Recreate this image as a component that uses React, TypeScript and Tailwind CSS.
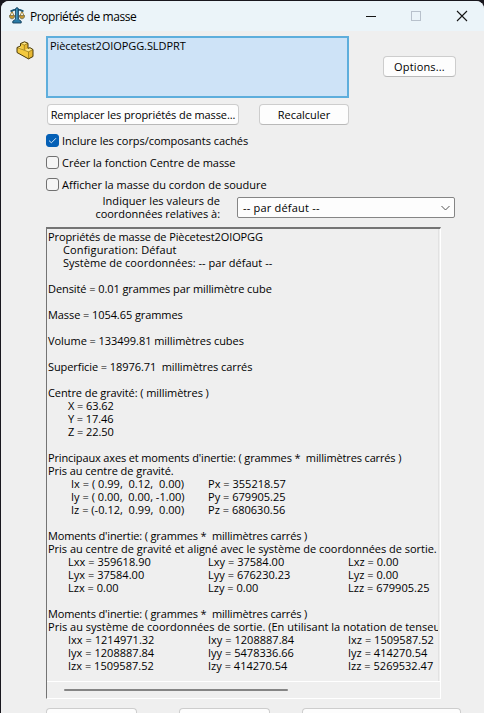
import type { ReactNode } from 'react';

function Line({ children, className = '' }: { children?: ReactNode; className?: string }) {
  return <div className={`h-[13px] whitespace-pre ${className}`}>{children}</div>;
}

function Row({ cells, first = 'pl-5' }: { cells: string[]; first?: string }) {
  return (
    <div className="flex h-[13px] whitespace-pre tracking-[0.02px]">
      <span className={`w-[160px] shrink-0 ${first}`}>{cells[0]}</span>
      <span className="w-[140px] shrink-0">{cells[1]}</span>
      <span className="shrink-0">{cells[2]}</span>
    </div>
  );
}

function Button({ children, className = '' }: { children?: ReactNode; className?: string }) {
  return (
    <button
      className={`flex h-[21px] shrink-0 items-center justify-center rounded-[4px] border border-[#cdcdcd] border-b-[#b9b9b9] bg-[#fdfdfd] whitespace-nowrap ${className}`}
    >
      {children}
    </button>
  );
}

function Check({ label, checked = false, className = '' }: { label: string; checked?: boolean; className?: string }) {
  return (
    <label className="flex h-[22px] items-center">
      <span
        className={`flex size-[13px] items-center justify-center rounded-[3px] border ${
          checked ? 'border-[#0560b6] bg-[#0560b6]' : 'border-[#717171] bg-[#f5f5f5]'
        }`}
      >
        {checked && (
          <svg width="9" height="9" viewBox="0 0 9 9" fill="none" stroke="#d5e9fa" strokeWidth="1">
            <path d="M1 4.6 3.4 6.8 8 2.2" />
          </svg>
        )}
      </span>
      <span className={`ml-[3px] whitespace-nowrap ${className}`}>{label}</span>
    </label>
  );
}

function ScaleIcon() {
  return (
    <svg width="16" height="17" viewBox="0 0 16 17" fill="none">
      <path d="M3 4.200 .9 9M3 4.200 5.100 9M13 4.200 10.900 9M13 4.200 15.100 9" stroke="#a8842f" strokeWidth="1" />
      <path d="M1.500 4.300 5 2.900h6l3.500 1.400" stroke="#1f5877" strokeWidth="1.800" />
      <path d="M.3 8.600h5.400c0 2-1.200 3.200-2.700 3.200S.3 10.600.3 8.600ZM10.300 8.600h5.400c0 2-1.200 3.200-2.700 3.200s-2.700-1.200-2.700-3.200Z" fill="#c9992f" stroke="#5a5f48" strokeWidth=".7" />
      <path d="M6.600 1.500 8 .5l1.400 1v10.700l2.800 2V16H3.800v-1.800l2.800-2Z" fill="#2a7ba6" stroke="#173f5b" strokeWidth=".9" />
      <path d="M7.700 2v11" stroke="#55a7ca" strokeWidth=".8" />
    </svg>
  );
}

function PartIcon() {
  return (
    <svg width="18" height="19" viewBox="0 0 18 19" fill="none" strokeLinejoin="round">
      <path d="M1 6.500 4.500 5V2.500L8.500.8l3.500 1.500v5l2-.6 3 1.800v7l-4.500 2.400L1 11.500Z" fill="#f3c93f" />
      <path d="M4.500 2.500 8.500.8 12 2.300 8.300 4ZM1 6.500 4.500 5v2l4 2 3.500-1.700 2-.6 3 1.800-4.500 2.300Z" fill="#ffe888" />
      <path d="M12.500 10.800 17 8.500v7l-4.500 2.400ZM8.300 4 12 2.300v5L8.500 9Z" fill="#e8b832" />
      <path d="M4.500 2.500 8.300 4 12 2.300M8.300 4v5M1 6.500l11.500 4.300L17 8.500M12.500 10.800v7" stroke="#80640f" strokeWidth=".6" />
      <path d="M1 6.500 4.500 5V2.500L8.500.8l3.500 1.500v5l2-.6 3 1.800v7l-4.500 2.400L1 11.500Z" stroke="#4b3b0b" />
    </svg>
  );
}

export default function App() {
  return (
    <div className="h-[713px] w-[484px] overflow-hidden bg-[#18171e] pt-px pl-px font-['Open_Sans',sans-serif] text-[11px] leading-[13px] text-black">
      <div className="flex h-full flex-col overflow-hidden rounded-t-[8px] bg-[#efefef]">
        <header className="flex h-[30px] shrink-0 items-center bg-[#ebf4f9] pb-px pl-[8px]">
          <ScaleIcon />
          <span className="ml-[5px] pt-[2px] text-[12px] tracking-[-0.42px]">Propriétés de masse</span>
          <svg className="ml-auto mr-[16px]" width="105" height="12" viewBox="0 0 105 12" fill="none" stroke="#151515">
            <path d="M3 6.500h10" />
            <rect x="48.500" y="1.500" width="9" height="9" stroke="#b8c1cc" />
            <path d="m94 1 10 10M104 1 94 11" strokeWidth="1.100" />
          </svg>
        </header>

        <main className="flex min-h-0 flex-1 flex-col pl-[45px]">
          <section className="-ml-[30px] mt-[5px] flex h-[62px] items-start">
            <div className="mt-[5px] w-[30px]"><PartIcon /></div>
            <div className="h-[62px] w-[303px] border-2 border-[#5eaedc] bg-[#cee3f7] pt-px pl-[2px] tracking-[-0.08px]">
              Piècetest2OIOPGG.SLDPRT
            </div>
            <Button className="mt-[20px] ml-[34px] w-[73px] tracking-[0.15px]">Options...</Button>
          </section>

          <div className="mt-[6px] flex gap-5 pl-px">
            <Button className="w-[192px] tracking-[-0.1px]">Remplacer les propriétés de masse...</Button>
            <Button className="w-[90px]">Recalculer</Button>
          </div>

          <div className="mt-[4px] flex flex-col">
            <Check checked label="Inclure les corps/composants cachés" className="tracking-[-0.05px]" />
            <Check label="Créer la fonction Centre de masse" className="tracking-[-0.02px]" />
            <Check label="Afficher la masse du cordon de soudure" className="tracking-[0.01px]" />
          </div>

          <div className="-mt-px flex h-[28px] items-start">
            <div className="w-[174px] text-right">
              <div className="tracking-[0.06px]">Indiquer les valeurs de</div>
              <div className="tracking-[-0.03px]">coordonnées relatives à:</div>
            </div>
            <div className="mt-[3px] ml-[17px] flex h-[21px] w-[218px] items-center justify-between rounded-[2px] border border-[#858585] bg-[#fdfdfd] pr-[4px] pl-[5px]">
              <span className="tracking-[0.2px]">-- par défaut --</span>
              <svg width="9" height="6" viewBox="0 0 9 6" fill="none" stroke="#555"><path d="m.5 1 4 4 4-4" /></svg>
            </div>
          </div>

          <section className="mt-[5px] flex h-[472px] w-[395px] shrink-0 flex-col border border-t-2 border-[#fff] border-t-[#747474] border-l-[#747474]">
            <div className="h-[452px] w-[392px] overflow-hidden border-r border-[#e2e2e2] pt-px pl-[1px] tracking-[-0.08px]">
              <Line className="tracking-[-0.1px]">Propriétés de masse de Piècetest2OIOPGG</Line>
              <Line className="pl-[15px] tracking-[0.15px]">Configuration: Défaut</Line>
              <Line className="pl-[15px] tracking-[0.02px]">Système de coordonnées: -- par défaut --</Line>
              <Line />
              <Line>Densité = 0.01 grammes par millimètre cube</Line>
              <Line />
              <Line>Masse = 1054.65 grammes</Line>
              <Line />
              <Line className="tracking-[-0.05px]">Volume = 133499.81 millimètres cubes</Line>
              <Line />
              <Line>Superficie = 18976.71  millimètres carrés</Line>
              <Line />
              <Line>Centre de gravité: ( millimètres )</Line>
              <Line className="pl-5">X = 63.62</Line>
              <Line className="pl-5">Y = 17.46</Line>
              <Line className="pl-5">Z = 22.50</Line>
              <Line />
              <Line className="tracking-[-0.14px]">Principaux axes et moments d'inertie: ( grammes *  millimètres carrés )</Line>
              <Line className="tracking-[-0.05px]">Pris au centre de gravité.</Line>
              <Row first="pl-[23px]" cells={['Ix = ( 0.99,  0.12,  0.00)', 'Px = 355218.57', '']} />
              <Row first="pl-[23px]" cells={['Iy = ( 0.00,  0.00, -1.00)', 'Py = 679905.25', '']} />
              <Row first="pl-[23px]" cells={['Iz = (-0.12,  0.99,  0.00)', 'Pz = 680630.56', '']} />
              <Line />
              <Line className="tracking-[-0.15px]">Moments d'inertie: ( grammes *  millimètres carrés )</Line>
              <Line className="tracking-[-0.02px]">Pris au centre de gravité et aligné avec le système de coordonnées de sortie.</Line>
              <Row cells={['Lxx = 359618.90', 'Lxy = 37584.00', 'Lxz = 0.00']} />
              <Row cells={['Lyx = 37584.00', 'Lyy = 676230.23', 'Lyz = 0.00']} />
              <Row cells={['Lzx = 0.00', 'Lzy = 0.00', 'Lzz = 679905.25']} />
              <Line />
              <Line className="tracking-[-0.15px]">Moments d'inertie: ( grammes *  millimètres carrés )</Line>
              <Line className="tracking-[0.01px]">Pris au système de coordonnées de sortie. (En utilisant la notation de tenseur)</Line>
              <Row cells={['Ixx = 1214971.32', 'Ixy = 1208887.84', 'Ixz = 1509587.52']} />
              <Row cells={['Iyx = 1208887.84', 'Iyy = 5478336.66', 'Iyz = 414270.54']} />
              <Row cells={['Izx = 1509587.52', 'Izy = 414270.54', 'Izz = 5269532.47']} />
            </div>
            <div className="flex h-[17px] items-center border-t border-white pl-[17px]">
              <div className="h-[2px] w-[224px] rounded-full bg-[#858585]" />
            </div>
          </section>

          <div className="mt-[9px] flex h-[5px] overflow-hidden">
            <Button className="w-[91px]" />
            <Button className="ml-[42px] w-[91px]" />
            <Button className="ml-[32px] w-[159px]" />
          </div>
        </main>
      </div>
    </div>
  );
}
